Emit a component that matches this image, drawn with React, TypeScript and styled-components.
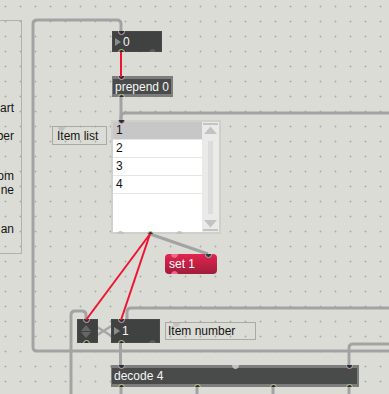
import styled, { createGlobalStyle } from 'styled-components'

const GlobalStyle = createGlobalStyle`
  html, body {
    margin: 0;
    padding: 0;
    background: #dcdcd7;
  }
  body {
    font-family: 'Liberation Sans', Arial, sans-serif;
  }
`

type TPos = { $x: number; $y: number; $w: number; $h: number }
type TKind = 'in' | 'out' | 'dim' | 'light' | 'pink' | 'link'
type TPort = { $at: number; $edge: 'top' | 'bottom'; $kind: TKind }

const portColors: Record<TKind, { ring: string; fill: string }> = {
  in: { ring: '#eaa29f', fill: '#1c3344' },
  out: { ring: '#d2d27a', fill: '#1c3344' },
  dim: { ring: '#5c5e5d', fill: '#5c5e5d' },
  light: { ring: '#c2c2be', fill: '#c2c2be' },
  pink: { ring: '#ef6a8c', fill: '#ef6a8c' },
  link: { ring: '#a9bac6', fill: '#2a3b48' },
}

const grayCords = [
  'M 389 351 H 37 Q 33 351 33 347 V 24 Q 33 20 37 20 H 117 Q 121 20 121 24 V 31',
  'M 389 113 H 125 Q 121 113 121 117 V 121',
  'M 121 97 V 121',
  'M 389 308 H 131 Q 127 308 127 312 V 320',
  'M 349 365 V 348 Q 349 344 353 344 H 389',
  'M 120.5 343 V 366',
  'M 71 394 V 315 Q 71 311 75 311 H 82 Q 86 311 86 315 V 320',
  'M 150 234 L 208 254',
  'M 121 387 V 394',
  'M 197 387 V 394',
  'M 273 387 V 394',
  'M 349 387 V 394',
]

const crossCords = ['M 86 342 L 121 320', 'M 86 320 L 121 342']

const redCords = ['M 121 52 V 77', 'M 150 234 L 86 320', 'M 150 234 L 121 320']

const notes = [
  { text: 'art', gap: 0 },
  { text: 'ber', gap: 14 },
  { text: 'om', gap: 26 },
  { text: 'ne', gap: 0 },
  { text: 'an', gap: 25 },
]

const items = ['1', '2', '3', '4']

const App = () => {
  return (
    <>
      <GlobalStyle />
      <Patcher>
        <Notes>
          {notes.map((n) => (
            <NoteLine key={n.text} $gap={n.gap}>
              {n.text}
            </NoteLine>
          ))}
        </Notes>

        <Cords viewBox='0 0 389 394'>
          {grayCords.map((d) => (
            <path key={d} d={d} stroke='#a3a3a3' strokeWidth={3} fill='none' />
          ))}
          {crossCords.map((d) => (
            <path key={d} d={d} stroke='#a6a6a6' strokeWidth={2.5} fill='none' />
          ))}
        </Cords>

        <NumberBox $x={112} $y={31} $w={50} $h={21}>
          <Arrow />
          0
          <Port $at={9} $edge='top' $kind='in' />
          <Port $at={9} $edge='bottom' $kind='out' />
          <Port $at={40} $edge='bottom' $kind='dim' />
        </NumberBox>

        <ObjectBox $x={112} $y={76} $w={61} $h={21}>
          prepend 0
          <Port $at={9} $edge='top' $kind='in' />
          <Port $at={9} $edge='bottom' $kind='out' />
        </ObjectBox>

        <Comment $x={52} $y={126} $w={55} $h={19} $pad={4}>
          Item list
          <Port $at={8} $edge='top' $kind='light' />
        </Comment>

        <ListBox $x={111} $y={120} $w={110} $h={114}>
          <Items>
            {items.map((item, i) => (
              <Row key={item} $selected={i === 0}>
                {item}
              </Row>
            ))}
          </Items>
          <Scroll>
            <svg width='15' height='11' viewBox='0 0 15 11'>
              <rect x='0' y='0' width='15' height='2' fill='#c3c3c3' />
              <polygon points='7.5,3.5 14,11 1,11' fill='#c3c3c3' />
            </svg>
            <Track />
            <svg width='15' height='11' viewBox='0 0 15 11'>
              <polygon points='1,0 14,0 7.5,7.5' fill='#c3c3c3' />
              <rect x='0' y='9' width='15' height='2' fill='#c3c3c3' />
            </svg>
          </Scroll>
          <Port $at={10} $edge='top' $kind='in' />
          <Port $at={9} $edge='bottom' $kind='light' />
          <Port $at={39} $edge='bottom' $kind='out' />
          <Port $at={68} $edge='bottom' $kind='light' />
        </ListBox>

        <Message $x={165} $y={254} $w={52} $h={20}>
          set 1
          <Port $at={9} $edge='top' $kind='pink' />
          <Port $at={9} $edge='bottom' $kind='pink' />
          <Port $at={43} $edge='top' $kind='link' />
        </Message>

        <NumberBox $x={77} $y={319} $w={21} $h={24}>
          <Stepper>
            <StepUp />
            <StepDown />
          </Stepper>
          <Port $at={9} $edge='top' $kind='in' />
          <Port $at={9} $edge='bottom' $kind='out' />
        </NumberBox>

        <NumberBox $x={111} $y={319} $w={49} $h={24}>
          <Arrow />
          1
          <Port $at={10} $edge='top' $kind='in' />
          <Port $at={10} $edge='bottom' $kind='out' />
          <Port $at={41} $edge='bottom' $kind='dim' />
        </NumberBox>

        <Comment $x={165} $y={322} $w={91} $h={18} $pad={2}>
          Item number
          <Port $at={10} $edge='top' $kind='light' />
        </Comment>

        <ObjectBox $x={111} $y={365} $w={248} $h={22}>
          decode 4
          <Port $at={10} $edge='top' $kind='in' />
          <Port $at={124} $edge='top' $kind='light' />
          <Port $at={238} $edge='top' $kind='in' />
          <Port $at={10} $edge='bottom' $kind='out' />
          <Port $at={86} $edge='bottom' $kind='out' />
          <Port $at={162} $edge='bottom' $kind='out' />
          <Port $at={238} $edge='bottom' $kind='out' />
        </ObjectBox>

        <Cords viewBox='0 0 389 394'>
          {redCords.map((d) => (
            <path key={d} d={d} stroke='#ef1530' strokeWidth={2} fill='none' />
          ))}
        </Cords>
      </Patcher>
    </>
  )
}

export default App

const Patcher = styled.div`
  position: relative;
  width: 389px;
  height: 394px;
  overflow: hidden;
  background-color: #dcdcd7;
  background-image: radial-gradient(circle at 5.5px 6.5px, #a9a9a5 0.7px, transparent 1.2px);
  background-size: 15px 15px;
  font-family: 'Liberation Sans', Arial, sans-serif;
  font-size: 12px;
`

const Cords = styled.svg`
  position: absolute;
  left: 0;
  top: 0;
  width: 389px;
  height: 394px;
  pointer-events: none;
`

const Notes = styled.div`
  position: absolute;
  left: -100px;
  top: 20px;
  width: 122px;
  height: 234px;
  box-sizing: border-box;
  border: 1px solid #b1b1ad;
  padding: 80px 7px 0 0;
  display: flex;
  flex-direction: column;
  align-items: flex-end;
  color: #151515;
  line-height: 14px;
`

const NoteLine = styled.span<{ $gap: number }>`
  margin-top: ${(p) => p.$gap}px;
`

const Node = styled.div<TPos>`
  position: absolute;
  left: ${(p) => p.$x}px;
  top: ${(p) => p.$y}px;
  width: ${(p) => p.$w}px;
  height: ${(p) => p.$h}px;
  box-sizing: border-box;
  overflow: hidden;
  white-space: nowrap;
`

const Port = styled.span<TPort>`
  position: absolute;
  left: ${(p) => p.$at - 3.5}px;
  ${(p) => p.$edge}: -3.5px;
  width: 7px;
  height: 7px;
  box-sizing: border-box;
  border-radius: 50%;
  border: 1.5px solid ${(p) => portColors[p.$kind].ring};
  background: ${(p) => portColors[p.$kind].fill};
`

const NumberBox = styled(Node)`
  background: #404241;
  box-shadow: inset 0 0 0 1px #484a49;
  display: flex;
  align-items: center;
  padding-left: 3px;
  gap: 2px;
  color: #f6f6f6;
`

const Arrow = styled.span`
  width: 0;
  height: 0;
  border-top: 4.5px solid transparent;
  border-bottom: 4.5px solid transparent;
  border-left: 6px solid #8b8d8c;
`

const Stepper = styled.div`
  display: flex;
  flex-direction: column;
  align-items: center;
  gap: 1px;
  margin-left: 1px;
`

const StepUp = styled.span`
  width: 0;
  height: 0;
  border-left: 5.5px solid transparent;
  border-right: 5.5px solid transparent;
  border-bottom: 6px solid #666867;
`

const StepDown = styled(StepUp)`
  border-bottom: none;
  border-top: 6px solid #666867;
`

const ObjectBox = styled(Node)`
  background: #494b4a;
  box-shadow: inset 0 3px 0 #7c7d7d, inset 0 -3px 0 #7c7d7d, inset 1px 0 0 #7c7d7d,
    inset -2px 0 0 #7c7d7d;
  color: #f6f6f6;
  display: flex;
  align-items: center;
  padding-left: 3px;
`

const Comment = styled(Node)<{ $pad: number }>`
  border: 1px solid #a9a9a5;
  padding-left: ${(p) => p.$pad}px;
  display: flex;
  align-items: center;
  color: #141414;
`

const Message = styled(Node)`
  border-radius: 4px;
  background: linear-gradient(#e3244f, #9f1d3a);
  color: #ffffff;
  padding-left: 4px;
  display: flex;
  align-items: center;
`

const ListBox = styled(Node)`
  background: #eaeae8;
  box-shadow: inset 0 0 0 2px #cfcfcb;
  padding: 2px;
  display: flex;
`

const Items = styled.div`
  width: 89px;
  background: #ffffff;
  display: flex;
  flex-direction: column;
`

const Row = styled.div<{ $selected: boolean }>`
  height: 17px;
  flex-shrink: 0;
  border-bottom: 1px solid #e6e6e6;
  background: ${(p) => (p.$selected ? '#c7c7c7' : '#ffffff')};
  color: #111111;
  font-size: 12px;
  line-height: 17px;
  padding-left: 3px;
`

const Scroll = styled.div`
  flex: 1;
  display: flex;
  flex-direction: column;
  align-items: center;
  padding: 1px 0 1px;
`

const Track = styled.div`
  flex: 1;
  width: 5px;
  margin: 7px 0 6px;
  background: #dcdcda;
`
